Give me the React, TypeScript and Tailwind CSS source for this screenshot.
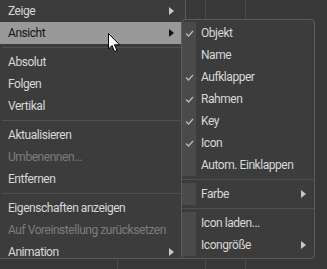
import { ReactNode } from "react"

type Item =
  | { kind: "sep" }
  | { kind: "item"; label: string; sub?: boolean; disabled?: boolean; active?: boolean; checked?: boolean }

const mainItems: Item[] = [
  { kind: "item", label: "Zeige", sub: true },
  { kind: "item", label: "Ansicht", sub: true, active: true },
  { kind: "sep" },
  { kind: "item", label: "Absolut" },
  { kind: "item", label: "Folgen" },
  { kind: "item", label: "Vertikal" },
  { kind: "sep" },
  { kind: "item", label: "Aktualisieren" },
  { kind: "item", label: "Umbenennen...", disabled: true },
  { kind: "item", label: "Entfernen" },
  { kind: "sep" },
  { kind: "item", label: "Eigenschaften anzeigen" },
  { kind: "item", label: "Auf Voreinstellung zurücksetzen", disabled: true },
  { kind: "item", label: "Animation", sub: true },
]

const subItems: Item[] = [
  { kind: "item", label: "Objekt", checked: true },
  { kind: "item", label: "Name" },
  { kind: "item", label: "Aufklapper", checked: true },
  { kind: "item", label: "Rahmen", checked: true },
  { kind: "item", label: "Key", checked: true },
  { kind: "item", label: "Icon", checked: true },
  { kind: "item", label: "Autom. Einklappen" },
  { kind: "sep" },
  { kind: "item", label: "Farbe", sub: true },
  { kind: "sep" },
  { kind: "item", label: "Icon laden..." },
  { kind: "item", label: "Icongröße", sub: true },
]

function Arrow({ dark }: { dark?: boolean }) {
  return (
    <svg width="5" height="8" viewBox="0 0 5 8" className="shrink-0">
      <path d="M0 0 L5 4 L0 8 Z" fill={dark ? "#111111" : "#c8c8c8"} />
    </svg>
  )
}

function Check() {
  return (
    <svg width="9" height="7" viewBox="0 0 9 7">
      <path d="M1 3.5 L3.5 6 L8 1" fill="none" stroke="#b8b8b8" strokeWidth="1.3" />
    </svg>
  )
}

function MainMenu() {
  return (
    <div className="absolute left-0 top-0 w-[186px] h-[259px] overflow-hidden bg-[#3c3c3c] border-r border-b border-[#5c5c5c] rounded-br-[4px]">
      {mainItems.map((it, i) => {
        if (it.kind === "sep")
          return (
            <div key={i} className="h-[7px] flex items-center px-[2px]">
              <div className="h-px w-full bg-[#4f4f4f]" />
            </div>
          )
        return (
          <div
            key={i}
            className={
              "h-[22px] flex items-center justify-between pl-[8px] pr-[8px] mr-[3px] whitespace-nowrap " +
              (it.active ? "bg-[#999999] text-[#151515]" : it.disabled ? "text-[#7c7c7c]" : "text-[#d8d8d8]")
            }
          >
            <span>{it.label}</span>
            {it.sub && <Arrow dark={it.active} />}
          </div>
        )
      })}
    </div>
  )
}

function SubMenu() {
  return (
    <div className="absolute left-[181px] top-[19px] w-[134px] h-[240px] bg-[#3c3c3c] border border-[#5c5c5c] rounded-[4px] pt-[2px]">
      {subItems.map((it, i) => {
        if (it.kind === "sep")
          return (
            <div key={i} className="h-[7px] flex items-center">
              <div className="h-px w-full bg-[#4f4f4f]" />
            </div>
          )
        return (
          <div key={i} className="h-[22px] flex items-stretch text-[#d8d8d8] whitespace-nowrap">
            <div className="w-[14px] shrink-0 bg-[#4a4a4a] flex items-center justify-center">
              {it.checked && <Check />}
            </div>
            <div className="flex-1 flex items-center justify-between pl-[5px] pr-[8px]">
              <span>{it.label}</span>
              {it.sub && <Arrow />}
            </div>
          </div>
        )
      })}
    </div>
  )
}

function Cursor(): ReactNode {
  return (
    <svg width="13" height="20" viewBox="0 0 13 20" className="absolute left-[108px] top-[33px]">
      <path
        d="M0.5 0.5 L0.5 16 L4 12.5 L6.5 18.5 L9 17.5 L6.5 11.8 L11.5 11.8 Z"
        fill="#ffffff"
        stroke="#000000"
        strokeWidth="1"
        strokeLinejoin="round"
      />
    </svg>
  )
}

export default function App() {
  return (
    <div
      className="relative w-[327px] h-[269px] overflow-hidden bg-[#383838] text-[12px] leading-none tracking-[-0.45px]"
      style={{ fontFamily: 'Roboto, "Noto Sans", sans-serif' }}
    >
      {/* background editor lines */}
      <div className="absolute left-[205px] top-0 h-full w-px bg-[#4a4a4a]" />
      <div className="absolute left-[245px] top-0 h-full w-px bg-[#4a4a4a]" />
      <div className="absolute left-[117px] top-[259px] h-full w-px bg-[#4a4a4a]" />
      <MainMenu />
      <SubMenu />
      <Cursor />
    </div>
  )
}
